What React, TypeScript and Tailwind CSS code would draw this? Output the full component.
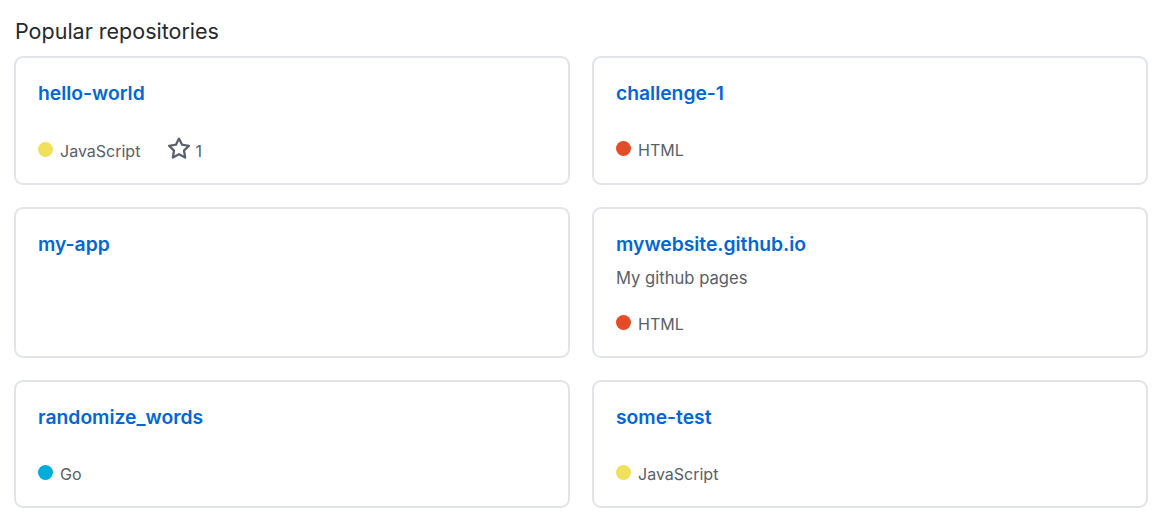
import React from 'react';

type Repo = {
  name: string;
  description?: string;
  language?: { name: string; color: string };
  stars?: number;
};

const repos: Repo[] = [
  { name: 'hello-world', language: { name: 'JavaScript', color: '#f1e05a' }, stars: 1 },
  { name: 'challenge-1', language: { name: 'HTML', color: '#e34c26' } },
  { name: 'my-app' },
  {
    name: 'mywebsite.github.io',
    description: 'My github pages',
    language: { name: 'HTML', color: '#e34c26' },
  },
  { name: 'randomize_words', language: { name: 'Go', color: '#00add8' } },
  { name: 'some-test', language: { name: 'JavaScript', color: '#f1e05a' } },
];

const StarIcon = () => (
  <svg viewBox="0 0 16 16" width="24" height="24" fill="#586069" aria-hidden="true">
    <path d="M8 .25a.75.75 0 0 1 .673.418l1.882 3.815 4.21.612a.75.75 0 0 1 .416 1.279l-3.046 2.97.719 4.192a.751.751 0 0 1-1.088.791L8 12.347l-3.766 1.98a.75.75 0 0 1-1.088-.79l.72-4.194L.818 6.374a.75.75 0 0 1 .416-1.28l4.21-.611L7.327.668A.75.75 0 0 1 8 .25Zm0 2.445L6.615 5.5a.75.75 0 0 1-.564.41l-3.097.45 2.24 2.184a.75.75 0 0 1 .216.664l-.528 3.084 2.769-1.456a.75.75 0 0 1 .698 0l2.77 1.456-.53-3.084a.75.75 0 0 1 .216-.664l2.24-2.183-3.096-.45a.75.75 0 0 1-.564-.41L8 2.694Z" />
  </svg>
);

const RepoCard = ({ repo }: { repo: Repo }) => (
  <div className="rounded-[9px] border-2 border-[#e1e4e8] bg-white p-[22px] flex flex-col">
    <a href="#" className="text-[19.3px] leading-[27px] font-semibold text-[#0366d6]">
      {repo.name}
    </a>
    <p className="mt-[9px] mb-6 text-[16.6px] leading-[23px] text-[#586069]">
      {repo.description}
    </p>
    {repo.language && (
      <div className="flex items-center text-[16px] leading-5 text-[#586069]">
        <span
          className="inline-block w-[15px] h-[15px] rounded-full mr-[7px] -mt-[3px]"
          style={{ backgroundColor: repo.language.color }}
        />
        <span>{repo.language.name}</span>
        {repo.stars !== undefined && (
          <span className="flex items-center ml-[27px] gap-[4px]">
            <span className="-mt-[3px]">
              <StarIcon />
            </span>
            {repo.stars}
          </span>
        )}
      </div>
    )}
  </div>
);

export default function App() {
  return (
    <div
      className="bg-white min-h-screen pl-[14px] pr-[18px] pt-[16px]"
      style={{ fontFamily: 'Inter, "Liberation Sans", sans-serif' }}
    >
      <h2 className="text-[21.5px] leading-[30px] text-[#24292e] pl-[1px] mb-[10px]">Popular repositories</h2>
      <div className="grid grid-cols-2 gap-x-[22px] gap-y-[22px]">
        {repos.map((r) => (
          <RepoCard key={r.name} repo={r} />
        ))}
      </div>
    </div>
  );
}
